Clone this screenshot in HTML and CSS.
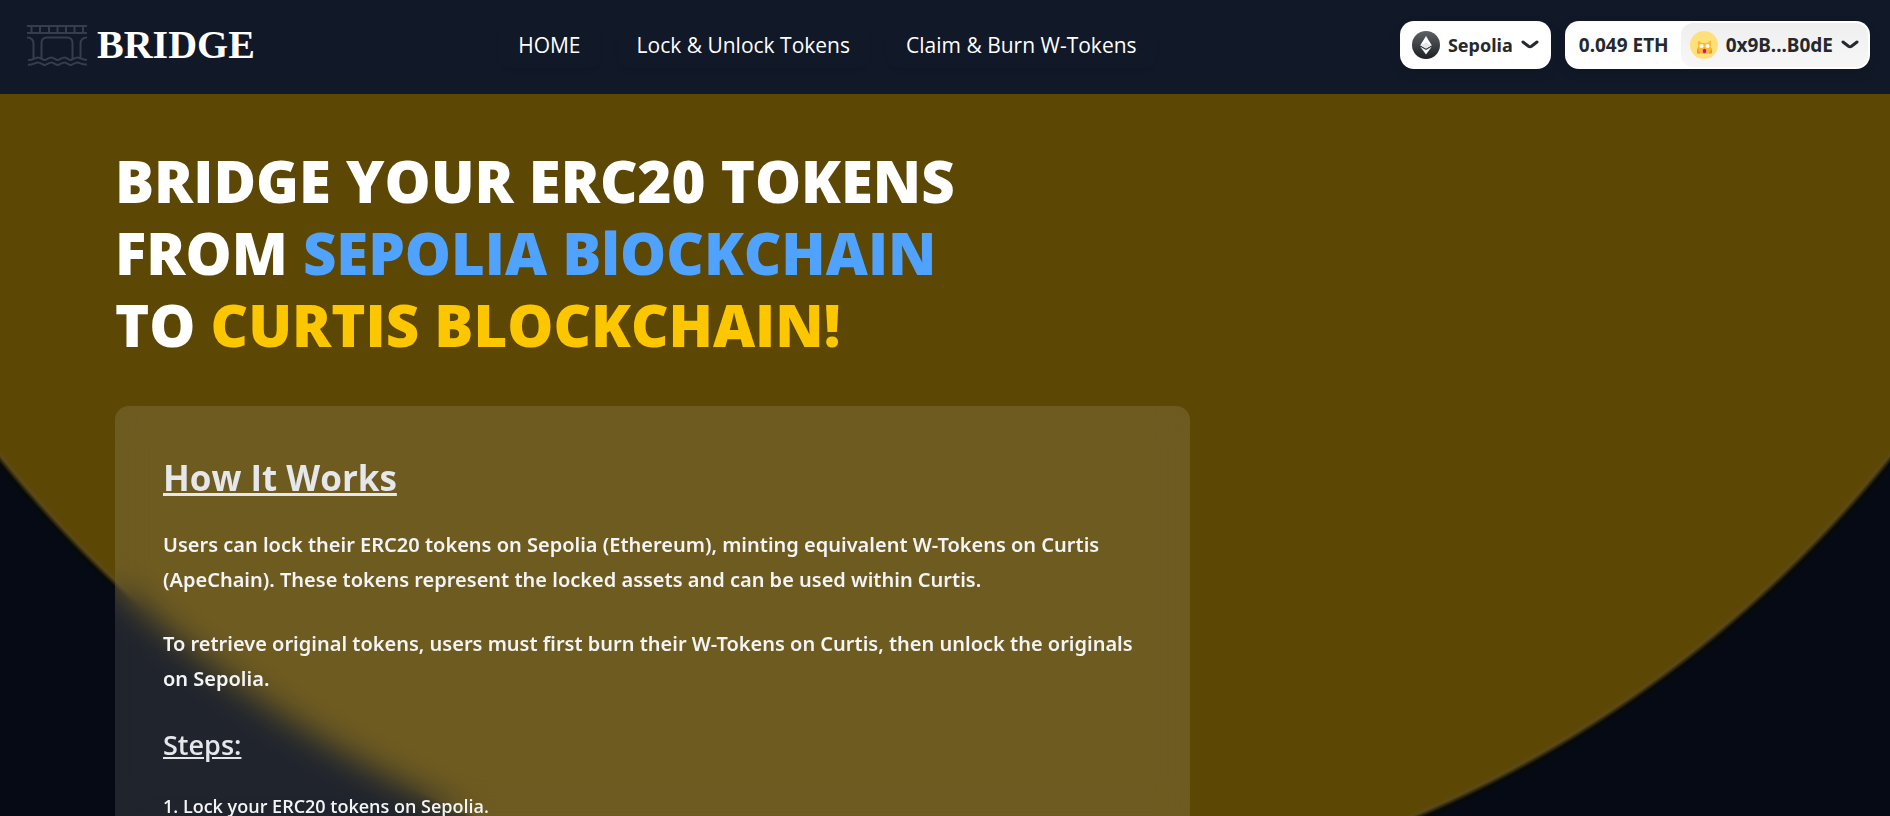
FILE: index.html
```html
<!DOCTYPE html>
<html lang="en">
<head>
<meta charset="utf-8">
<meta name="viewport" content="width=device-width, initial-scale=1">
<title>Bridge</title>
<link rel="stylesheet" href="styles.css">
</head>
<body>
<header class="header">
  <a class="brand" href="#">
    <svg class="brand-icon" viewBox="0 0 60 42" fill="none" stroke="#363d4c" stroke-width="2" aria-hidden="true">
      <path d="M0 2H60M0 9H60M4.500 2V9M13 2V9M22 2V9M30.500 2V9M39 2V9M47.500 2V9M56 2V9"/>
      <path d="M0 13.500C5 13.500 6.500 16 6.500 20V35M14.500 35V19Q14.500 13.500 20 13.500H40Q45.500 13.500 45.500 19V35M60 13.500C55 13.500 53.500 16 53.500 20V35"/>
      <path d="M1 36C6 36.500 8 33.500 11 33.500S16 36.500 18 36S22 33.500 24.500 33.500S29 36.500 31 36S35 33.500 37.500 33.500S42 36.500 44 36S48 33.500 50.500 33.500S55 36 60 36M1 40.500C6 41.500 8 38.500 11 38.500S16 41.500 18 41S22 38.500 24.500 38.500S29 41.500 31 41S35 38.500 37.500 38.500S42 41.500 44 41S48 38.500 50.500 38.500S55 41 60 40.500"/>
    </svg>
    <span>BRIDGE</span>
  </a>
  <nav class="nav">
    <a class="nav-link" href="#home">HOME</a>
    <a class="nav-link" href="#lock">Lock &amp; Unlock Tokens</a>
    <a class="nav-link" href="#claim">Claim &amp; Burn W-Tokens</a>
  </nav>
  <div class="wallet">
    <button class="pill chain" type="button">
      <svg class="avatar" viewBox="0 0 28 28" aria-hidden="true">
        <defs><linearGradient id="eth" x1="0" y1="0" x2="0" y2="1"><stop offset="0" stop-color="#5f6265"/><stop offset="1" stop-color="#1c2024"/></linearGradient></defs>
        <circle cx="14" cy="14" r="14" fill="url(#eth)"/>
        <path d="M14 5 8.300 14.300 14 17.600l5.700-3.300z" fill="#fff"/>
        <path d="M8.300 14.300 14 11.800l5.700 2.500L14 17.600z" fill="#e4e5e6"/>
        <path d="M8.300 15.700 14 23.500l5.700-7.800L14 19z" fill="#f4f4f4"/>
      </svg>
      <span>Sepolia</span>
      <svg class="chevron" viewBox="0 0 18 10" aria-hidden="true"><path d="M2 2 7.500 6.200Q9 7.200 10.500 6.200L16 2"/></svg>
    </button>
    <button class="pill account" type="button">
      <span class="balance">0.049 ETH</span>
      <span class="address">
        <svg class="avatar" viewBox="0 0 28 28" aria-hidden="true">
          <circle cx="14" cy="14" r="14" fill="#ffe07a"/>
          <path d="M7 22.500V17H8V9.500L12 12H17L21 9.500V17H22V22.500Z" fill="#fdb92e"/>
          <path d="M7 22.500V18Q10 19.500 10 22.500ZM22 22.500V18Q19 19.500 19 22.500Z" fill="#f2992e"/>
          <circle cx="11.500" cy="15" r="2.100" fill="#fff"/><circle cx="17.500" cy="15" r="2.100" fill="#fff"/>
          <path d="M12 18.500H17V22.500H12Z" fill="#f5a860"/>
          <ellipse cx="14.500" cy="20" rx="1.700" ry="2.300" fill="#c2187a"/>
        </svg>
        <span>0x9B...B0dE</span>
        <svg class="chevron" viewBox="0 0 18 10" aria-hidden="true"><path d="M2 2 7.500 6.200Q9 7.200 10.500 6.200L16 2"/></svg>
      </span>
    </button>
  </div>
</header>
<main class="hero">
  <h1 class="title">BRIDGE YOUR ERC20 TOKENS<br>FROM <span class="blue">SEPOLIA BlOCKCHAIN</span><br>TO <span class="gold">CURTIS BLOCKCHAIN!</span></h1>
  <section class="card">
    <h2 class="card-title">How It Works</h2>
    <p class="text">Users can lock their ERC20 tokens on Sepolia (Ethereum), minting equivalent W-Tokens on Curtis (ApeChain). These tokens represent the locked assets and can be used within Curtis.</p>
    <p class="text">To retrieve original tokens, users must first burn their W-Tokens on Curtis, then unlock the originals on Sepolia.</p>
    <h3 class="steps-title">Steps:</h3>
    <p class="step">1. Lock your ERC20 tokens on Sepolia.</p>
  </section>
</main>
</body>
</html>
```
FILE: styles.css
```css
* { box-sizing: border-box; }

body {
  margin: 0;
  height: 100vh;
  display: flex;
  flex-direction: column;
  overflow: hidden;
  font-family: "Open Sans", "Noto Sans", sans-serif;
  color: #f3f4f6;
  background: #050a14;
}

.header {
  display: flex;
  align-items: center;
  justify-content: space-between;
  flex: none;
  padding: 21px 20px 25px 27px;
  background: #111827;
}

.brand {
  display: flex;
  align-items: center;
  gap: 10px;
  color: #fff;
  font: bold 40px/48px "Liberation Serif", serif;
  text-decoration: none;
}

.brand-icon { width: 60px; height: 42px; }

.nav { display: flex; gap: 16px; }

.nav-link {
  padding: 7px 20px;
  border-radius: 12px;
  color: #fff;
  font-size: 21px;
  line-height: 32px;
  text-decoration: none;
  box-shadow: 0 4px 4px -2px rgba(0, 0, 0, 0.1);
}

.wallet { display: flex; gap: 14px; }

.pill {
  display: flex;
  align-items: center;
  height: 48px;
  border: 0;
  border-radius: 14px;
  background: #fff;
  color: #25292e;
  font: bold 19px/24px "Noto Sans", sans-serif;
  box-shadow: 0 4px 12px rgba(0, 0, 0, 0.1);
}

.chain { gap: 8px; padding: 0 12px; font-size: 18px; }

.account { padding: 0 2px 0 14px; gap: 12px; }

.address {
  display: flex;
  align-items: center;
  gap: 8px;
  height: 44px;
  padding: 0 9px;
  border-radius: 12px;
  background: linear-gradient(#efeff0, #f7f7f7);
}

.avatar { width: 28px; height: 28px; }

.chevron {
  width: 18px;
  height: 10px;
  fill: none;
  stroke: #25292e;
  stroke-width: 3;
  stroke-linecap: round;
}

.hero {
  flex: 1;
  display: flex;
  flex-direction: column;
  padding: 51px 115px 0;
  background: radial-gradient(circle at 50% -393px, #5c4705 1205px, #5c4a17 1209px, #080a09 1214px, #050a14 1219px);
}

.title {
  margin: 0 0 45px;
  color: #fff;
  font-size: 58px;
  font-weight: 800;
  line-height: 72px;
}

.blue { color: #50a2ff; }
.gold { color: #fdc700; }

.card {
  flex: 1;
  max-width: 1075px;
  padding: 48px 48px 0;
  border-radius: 14px 14px 0 0;
  background: rgba(255, 255, 255, 0.11);
  backdrop-filter: blur(16px);
}

.card-title {
  margin: 0 0 25px;
  color: #e5e7eb;
  font-size: 35px;
  font-weight: 700;
  line-height: 48px;
  text-decoration: underline;
}

.text {
  margin: 0 0 29px;
  font-family: "Noto Sans", sans-serif;
  font-size: 20px;
  font-weight: 600;
  line-height: 35px;
}

.steps-title {
  margin: 0 0 25px;
  color: #e5e7eb;
  font-size: 27px;
  font-weight: 600;
  line-height: 40px;
  text-decoration: underline;
}

.step {
  margin: 0;
  font-size: 18px;
  font-weight: 600;
  line-height: 32px;
}
```
